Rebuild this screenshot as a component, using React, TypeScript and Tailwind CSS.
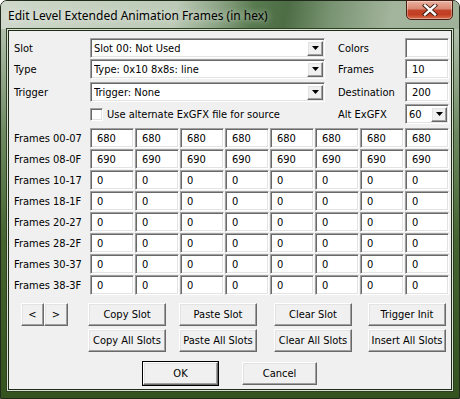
import React from 'react';

const sunken =
  'bg-white border border-t-[#a0a0a0] border-l-[#a0a0a0] border-r-white border-b-white shadow-[inset_1px_1px_0_#696969,inset_-1px_-1px_0_#e3e3e3]';
const raised =
  'bg-[#f0f0f0] border border-t-white border-l-white border-r-[#696969] border-b-[#696969] shadow-[inset_-1px_-1px_0_#a0a0a0,inset_1px_1px_0_#e3e3e3]';

const rowLabels = [
  'Frames 00-07',
  'Frames 08-0F',
  'Frames 10-17',
  'Frames 18-1F',
  'Frames 20-27',
  'Frames 28-2F',
  'Frames 30-37',
  'Frames 38-3F',
];

const DropArrow: React.FC = () => (
  <div className={`${raised} w-[16px] h-[15px] flex items-center justify-center`}>
    <svg width="7" height="4" viewBox="0 0 7 4">
      <path d="M0 0 H7 L3.5 4 Z" fill="#000" />
    </svg>
  </div>
);

const Combo: React.FC<{ text: string; className?: string }> = ({ text, className }) => (
  <div className={`${sunken} ${className ?? ''} h-[20px] flex items-center pl-[3px] pr-[1px]`}>
    <span className="flex-1 truncate">{text}</span>
    <DropArrow />
  </div>
);

const Edit: React.FC<{ text?: string; className?: string }> = ({ text, className }) => (
  <div className={`${sunken} ${className ?? ''} h-[20px] flex items-center pl-[6px]`}>{text}</div>
);

const Button: React.FC<{ label: string; className?: string; primary?: boolean }> = ({
  label,
  className,
  primary,
}) => (
  <div className={`${primary ? 'outline outline-1 outline-black -outline-offset-0' : ''} ${className ?? ''}`}>
    <div className={`${raised} h-full w-full flex items-center justify-center`}>{label}</div>
  </div>
);

export default function App() {
  return (
    <div className="w-[460px] h-[399px] overflow-hidden bg-white">
      <div className="relative w-[460px] h-[399px] rounded-t-[7px] border border-[#1f2a1a] bg-[linear-gradient(to_bottom,#c2cdbd_0px,#a9b9a3_40px,#6f8a63_130px,#456430_240px,#35531f_100%)] flex flex-col">
        {/* Title bar */}
        <div className="h-[28px] shrink-0 rounded-t-[6px] bg-[linear-gradient(100deg,#cfd8cb_0%,#bccab6_38%,#8ea687_47%,#587a4f_55%,#4d6d45_62%,#7a9573_72%,#a3b59d_85%,#9fb199_100%)] flex items-start">
          <div className="pl-[7px] pt-[7px] text-[12px] leading-[16px] text-black font-['Noto_Sans',sans-serif] [text-shadow:0_0_6px_rgba(255,255,255,0.9)]">
            Edit Level Extended Animation Frames (in hex)
          </div>
          <div className="ml-auto mr-[6px] -mt-px w-[47px] h-[20px] rounded-b-[5px] border border-[#4a1f14] bg-[linear-gradient(to_bottom,#eab0a0_0%,#d98770_45%,#c4442a_50%,#c23e22_75%,#d8704f_100%)] shadow-[inset_0_0_0_1px_rgba(255,255,255,0.35)] flex items-center justify-center">
            <svg width="16" height="12" viewBox="0 0 16 12">
              <path d="M3 1.5 L13 10.5 M13 1.5 L3 10.5" stroke="#3a1a10" strokeWidth="4.2" strokeLinecap="square" />
              <path d="M3 1.5 L13 10.5 M13 1.5 L3 10.5" stroke="#ffffff" strokeWidth="2.4" strokeLinecap="square" />
            </svg>
          </div>
        </div>

        {/* Client area */}
        <div className="mx-[6px] mb-[7px] flex-1 border border-[#d9e2d3] outline outline-1 outline-[#2c3f22]">
          <div className="h-full bg-[#f0f0f0] border border-[#1c2a16] text-[11px] leading-[13px] text-black font-['DejaVu_Sans',sans-serif] font-stretch-condensed flex flex-col">
            {/* Top section */}
            <div className="pt-[7px] pl-[5px] flex">
              <div className="flex flex-col">
                <div className="flex items-center h-[20px]">
                  <div className="w-[76px]">Slot</div>
                  <Combo text="Slot 00: Not Used" className="w-[235px]" />
                </div>
                <div className="flex items-center h-[20px] mt-[1px]">
                  <div className="w-[76px]">Type</div>
                  <Combo text="Type: 0x10 8x8s: line" className="w-[235px]" />
                </div>
                <div className="flex items-center h-[20px] mt-[3px]">
                  <div className="w-[76px]">Trigger</div>
                  <Combo text="Trigger: None" className="w-[235px]" />
                </div>
                <div className="flex items-center h-[20px] mt-[2px]">
                  <div className="w-[76px]" />
                  <div className={`${sunken} w-[13px] h-[13px]`} />
                  <div className="ml-[4px]">Use alternate ExGFX file for source</div>
                </div>
              </div>
              <div className="ml-[13px] flex flex-col">
                <div className="flex items-center h-[20px]">
                  <div className="w-[67px]">Colors</div>
                  <Edit className="w-[44px]" />
                </div>
                <div className="flex items-center h-[20px] mt-[1px]">
                  <div className="w-[67px]">Frames</div>
                  <Edit text="10" className="w-[44px]" />
                </div>
                <div className="flex items-center h-[20px] mt-[3px]">
                  <div className="w-[67px]">Destination</div>
                  <Edit text="200" className="w-[44px]" />
                </div>
                <div className="flex items-center h-[20px] mt-[2px]">
                  <div className="w-[67px]">Alt ExGFX</div>
                  <Combo text="60" className="w-[44px]" />
                </div>
              </div>
            </div>

            {/* Frame grid */}
            <div className="mt-[4px] pl-[5px] flex flex-col gap-[1px]">
              {rowLabels.map((label, r) => (
                <div key={label} className="flex items-center h-[20px]">
                  <div className="w-[76px]">{label}</div>
                  <div className="flex gap-[1px]">
                    {Array.from({ length: 8 }).map((_, c) => (
                      <Edit
                        key={c}
                        text={r === 0 ? '680' : r === 1 ? '690' : '0'}
                        className="w-[44px] pl-[5px]"
                      />
                    ))}
                  </div>
                </div>
              ))}
            </div>

            {/* Slot buttons */}
            <div className="mt-[8px] flex">
              <div className="ml-[12px] flex h-[23px]">
                <Button label="<" className="w-[23px] h-[23px]" />
                <Button label=">" className="w-[24px] h-[23px]" />
              </div>
              <div className="ml-[20px] flex flex-col gap-[3px]">
                <Button label="Copy Slot" className="w-[78px] h-[23px]" />
                <Button label="Copy All Slots" className="w-[78px] h-[23px]" />
              </div>
              <div className="ml-[13px] flex flex-col gap-[3px]">
                <Button label="Paste Slot" className="w-[78px] h-[23px]" />
                <Button label="Paste All Slots" className="w-[78px] h-[23px]" />
              </div>
              <div className="ml-[17px] flex flex-col gap-[3px]">
                <Button label="Clear Slot" className="w-[78px] h-[23px]" />
                <Button label="Clear All Slots" className="w-[78px] h-[23px]" />
              </div>
              <div className="ml-[16px] flex flex-col gap-[3px]">
                <Button label="Trigger Init" className="w-[78px] h-[23px]" />
                <Button label="Insert All Slots" className="w-[78px] h-[23px]" />
              </div>
            </div>

            {/* OK / Cancel */}
            <div className="mt-[10px] flex justify-center gap-[24px]">
              <Button label="OK" primary className="w-[75px] h-[23px]" />
              <Button label="Cancel" className="w-[75px] h-[23px]" />
            </div>
          </div>
        </div>
      </div>
    </div>
  );
}
